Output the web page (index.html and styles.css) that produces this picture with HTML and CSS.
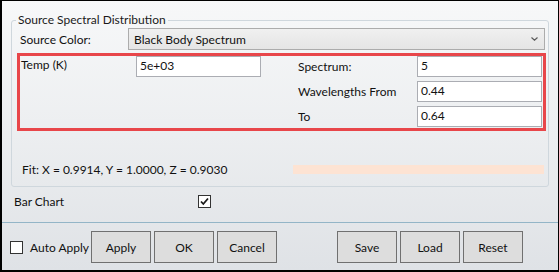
FILE: index.html
```html
<!DOCTYPE html>
<html>
<head>
<meta charset="utf-8">
<link rel="stylesheet" href="styles.css">
</head>
<body>
<div class="window">
  <fieldset class="group">
    <legend class="group-title">Source Spectral Distribution</legend>
    <div class="source-row">
      <span class="source-label">Source Color:</span>
      <div class="combo">
        <span class="combo-text">Black Body Spectrum</span>
        <svg class="chevron" width="7" height="4" viewBox="0 0 7 4"><path d="M0.5 0.5 L3.5 3.2 L6.5 0.5" fill="none" stroke="#5a5a5a" stroke-width="1.2"/></svg>
      </div>
    </div>
    <div class="params">
      <span class="lbl temp-lbl">Temp (K)</span>
      <div class="field temp-field">5e+03</div>
      <span class="lbl r1">Spectrum:</span>
      <div class="field f1">5</div>
      <span class="lbl r2">Wavelengths From</span>
      <div class="field f2">0.44</div>
      <span class="lbl r3">To</span>
      <div class="field f3">0.64</div>
    </div>
    <div class="fit-row">
      <span class="fit-text">Fit: X = 0.9914, Y = 1.0000, Z = 0.9030</span>
      <div class="fit-bar"></div>
    </div>
  </fieldset>
  <div class="bar-row">
    <span class="bar-label">Bar Chart</span>
    <span class="check"><svg width="11" height="11" viewBox="0 0 11 11"><path d="M2 5.5 L4.3 8 L9 2.5" fill="none" stroke="#1a1a1a" stroke-width="1.8"/></svg></span>
  </div>
  <div class="separator"></div>
  <div class="button-row">
    <label class="auto-apply"><span class="check"></span><span>Auto Apply</span></label>
    <div class="btn-group">
      <button class="btn">Apply</button>
      <button class="btn">OK</button>
      <button class="btn">Cancel</button>
    </div>
    <div class="btn-group right">
      <button class="btn">Save</button>
      <button class="btn">Load</button>
      <button class="btn">Reset</button>
    </div>
  </div>
</div>
</body>
</html>
```
FILE: styles.css
```css
* { box-sizing: border-box; }
html, body { margin: 0; padding: 0; }
body {
  font-family: Lato, "Noto Sans", sans-serif;
  font-size: 12px;
  color: #111;
}
.window {
  width: 559px;
  height: 272px;
  border-style: solid;
  border-color: #000;
  border-width: 1px 1px 2px 2px;
  background: linear-gradient(to bottom, #f7f8f9 0%, #eceef0 50%, #dfe2e6 100%);
  display: flex;
  flex-direction: column;
}
.group {
  margin: 11px 9px 0 9px;
  padding: 0 0 9px 0;
  border: 1px solid #cfd7dd;
  border-radius: 3px;
  min-width: 0;
}
.group-title {
  margin-left: 4px;
  padding: 0 2px;
  line-height: 16px;
  color: #1a1a1a;
}
.source-row {
  display: flex;
  align-items: center;
  height: 22px;
}
.source-label {
  padding-left: 8px;
  width: 116px;
}
.combo {
  margin-left: auto;
  margin-right: 3px;
  width: 417px;
  height: 22px;
  border: 1px solid #acacac;
  background: linear-gradient(to bottom, #f0f0f0, #e5e5e5);
  display: flex;
  align-items: center;
  padding: 0 6px 0 5px;
}
.combo-text { flex: 1; }
.chevron { display: block; }
.params {
  margin: 3px 2px 0 5px;
  height: 78px;
  border: 3px solid #e8464a;
  display: grid;
  grid-template-columns: 116px 125px 37px 119px 125px;
  grid-template-rows: 21px 21px 21px;
  row-gap: 4px;
  align-items: center;
}
.lbl { line-height: 16px; }
.temp-lbl { grid-column: 1; grid-row: 1; padding-left: 1px; align-self: start; padding-top: 1px; }
.temp-field { grid-column: 2; grid-row: 1; }
.r1 { grid-column: 4; grid-row: 1; }
.r2 { grid-column: 4; grid-row: 2; }
.r3 { grid-column: 4; grid-row: 3; }
.f1 { grid-column: 5; grid-row: 1; }
.f2 { grid-column: 5; grid-row: 2; }
.f3 { grid-column: 5; grid-row: 3; }
.field {
  height: 21px;
  background: #fff;
  border: 1px solid #abadb3;
  padding: 1px 3px;
  line-height: 16px;
}
.fit-row {
  margin-top: 30px;
  height: 16px;
  display: flex;
  align-items: center;
}
.fit-text { padding-left: 10px; }
.fit-bar {
  margin-left: auto;
  margin-right: 4px;
  width: 251px;
  height: 9px;
  background: #fde3d3;
}
.bar-row {
  margin-top: 6px;
  height: 16px;
  display: flex;
  align-items: center;
}
.bar-label { padding-left: 12px; width: 196px; }
.check {
  width: 13px;
  height: 13px;
  background: #fff;
  border: 1px solid #333;
  display: flex;
  align-items: center;
  justify-content: center;
}
.separator {
  margin-top: 13px;
  height: 1px;
  background: #93b5c7;
}
.button-row {
  margin-top: 8px;
  display: flex;
  align-items: center;
  padding: 0 35px 0 8px;
}
.auto-apply {
  width: 81px;
  display: flex;
  align-items: center;
  gap: 7px;
}
.btn-group { display: flex; gap: 3px; }
.btn-group.right { margin-left: auto; }
.btn {
  width: 60px;
  height: 32px;
  font: inherit;
  color: #111;
  background: #dddddd;
  border: 1px solid #707070;
  padding: 0;
}
```
